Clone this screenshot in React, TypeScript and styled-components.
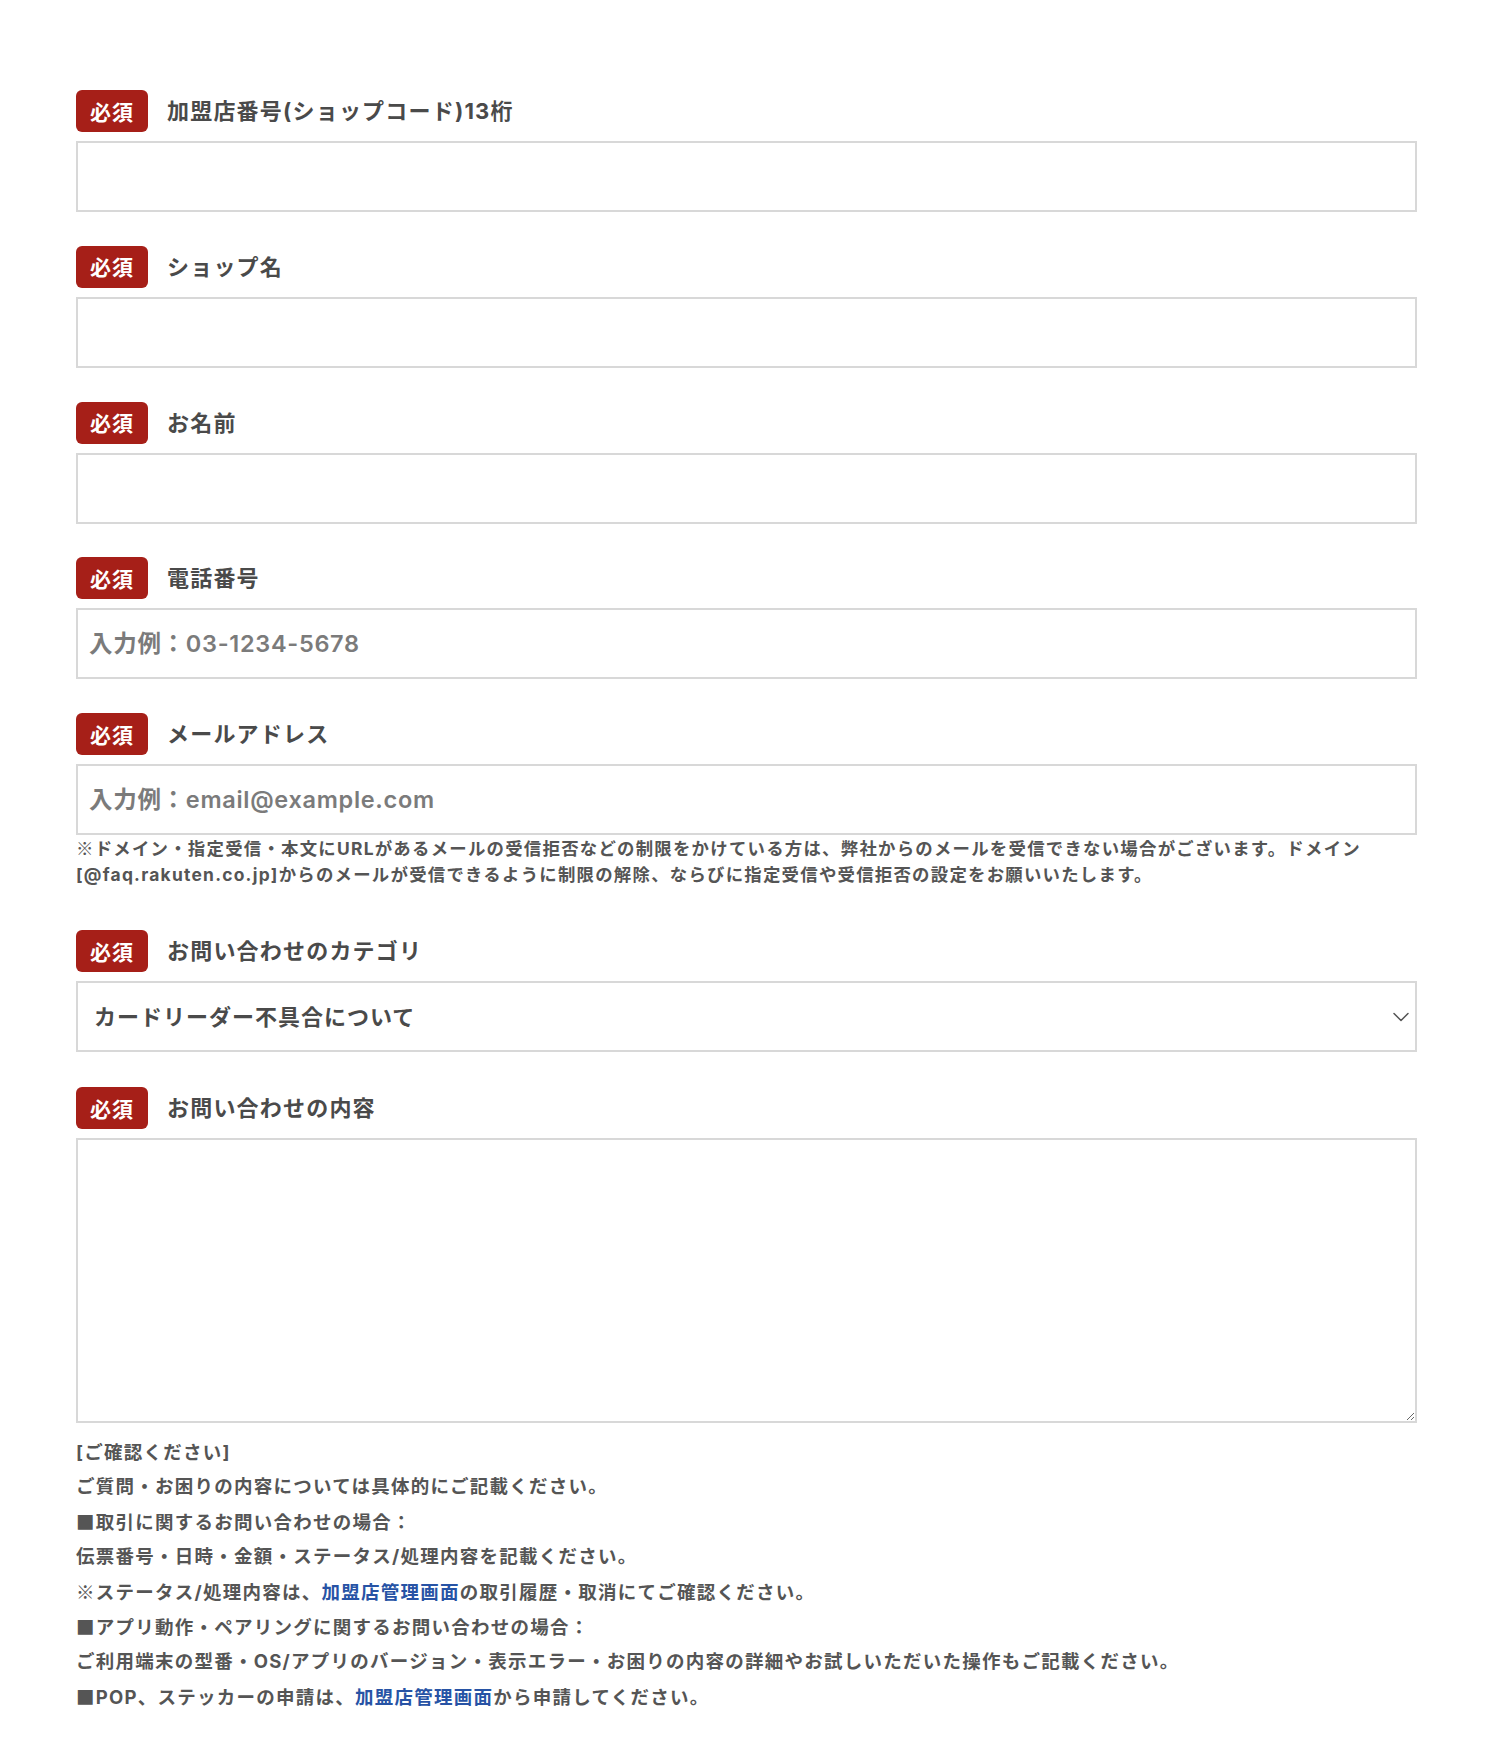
import React from "react";
import styled, { createGlobalStyle } from "styled-components";

const Global = createGlobalStyle`
  html, body { margin: 0; padding: 0; background: #ffffff; }
  body {
    font-family: Inter, "Noto Sans CJK JP", "Noto Sans", sans-serif;
    color: #4a4a4a;
  }
  * { box-sizing: border-box; }
`;

const Page = styled.div`
  width: 1500px;
  padding: 90px 83px 56px 76px;
`;

const Field = styled.div<{ $gap?: number }>`
  display: flex;
  flex-direction: column;
  margin-bottom: ${(p) => (p.$gap ?? 33.75)}px;
`;

const LabelRow = styled.div`
  display: flex;
  align-items: center;
  gap: 19px;
  height: 42px;
  margin-bottom: 9px;
`;

const Badge = styled.span`
  display: inline-flex;
  align-items: center;
  justify-content: center;
  width: 72px;
  height: 42px;
  border-radius: 6px;
  background: #a61f18;
  color: #ffffff;
  font-family: "Noto Sans CJK JP", sans-serif;
  font-size: 21px;
  font-weight: 700;
  letter-spacing: 1px;
  line-height: 1;
`;

const LabelText = styled.span`
  font-size: 22px;
  font-weight: 700;
  letter-spacing: 1.2px;
  color: #4a4a4a;
  line-height: 1;
`;

const TextInput = styled.input`
  display: block;
  width: 100%;
  height: 71px;
  margin: 0;
  padding: 0 11px;
  border: 2px solid #d8d8d8;
  border-radius: 0;
  background: #ffffff;
  font-family: inherit;
  font-size: 23.5px;
  font-weight: 600;
  letter-spacing: 0.7px;
  color: #4a4a4a;
  outline: none;
  &::placeholder {
    color: #7b7b7b;
    opacity: 1;
  }
`;

const Note = styled.p`
  margin: 0;
  font-size: 17.4px;
  font-weight: 700;
  letter-spacing: 1.25px;
  line-height: 26px;
  color: #555555;
`;

/* glyphs such as ※ and ■ are taken from the Japanese face */
const Jp = styled.span`
  font-family: "Noto Sans CJK JP", sans-serif;
`;

const SelectWrap = styled.div`
  position: relative;
  width: 100%;
  height: 71px;
`;

const Select = styled.select`
  display: block;
  width: 100%;
  height: 100%;
  margin: 0;
  padding: 0 50px 0 16px;
  border: 2px solid #d8d8d8;
  border-radius: 0;
  background: #ffffff;
  appearance: none;
  -webkit-appearance: none;
  font-family: inherit;
  font-size: 22px;
  font-weight: 700;
  letter-spacing: 1px;
  color: #4a4a4a;
  outline: none;
`;

const Chevron = styled.svg`
  position: absolute;
  right: 8px;
  top: 50%;
  width: 16px;
  height: 10px;
  transform: translateY(-50%);
  pointer-events: none;
`;

const TextArea = styled.textarea`
  display: block;
  width: 100%;
  height: 285px;
  margin: 0;
  padding: 11px;
  border: 2px solid #d8d8d8;
  border-radius: 0;
  background: #ffffff;
  font-family: inherit;
  font-size: 20px;
  color: #4a4a4a;
  outline: none;
  resize: vertical;
`;

const Notes = styled.div`
  margin-top: 12px;
  display: flex;
  flex-direction: column;
`;

const NoteLine = styled.div`
  font-size: 18.5px;
  font-weight: 700;
  letter-spacing: 1.25px;
  line-height: 34.4px;
  color: #555555;
`;

const Link = styled.a`
  color: #2753a5;
  text-decoration: none;
`;

type FieldDef = { label: string; placeholder?: string };

const simpleFields: FieldDef[] = [
  { label: "加盟店番号(ショップコード)13桁" },
  { label: "ショップ名" },
  { label: "お名前" },
  { label: "電話番号", placeholder: "入力例：03-1234-5678" },
];

const Label: React.FC<{ text: string }> = ({ text }) => (
  <LabelRow>
    <Badge>必須</Badge>
    <LabelText>{text}</LabelText>
  </LabelRow>
);

export default function App() {
  return (
    <>
      <Global />
      <Page>
        {simpleFields.map((f) => (
          <Field key={f.label}>
            <Label text={f.label} />
            <TextInput type="text" placeholder={f.placeholder} />
          </Field>
        ))}

        <Field $gap={42}>
          <Label text="メールアドレス" />
          <TextInput type="text" placeholder="入力例：email@example.com" />
          <Note>
            <Jp>※</Jp>ドメイン・指定受信・本文にURLがあるメールの受信拒否などの制限をかけている方は、弊社からのメールを受信できない場合がございます。ドメイン
            <br />
            [@faq.rakuten.co.jp]からのメールが受信できるように制限の解除、ならびに指定受信や受信拒否の設定をお願いいたします。
          </Note>
        </Field>

        <Field $gap={35}>
          <Label text="お問い合わせのカテゴリ" />
          <SelectWrap>
            <Select defaultValue="card">
              <option value="card">カードリーダー不具合について</option>
            </Select>
            <Chevron viewBox="0 0 16 10" fill="none">
              <polyline
                points="1,1.5 8,8.5 15,1.5"
                stroke="#555555"
                strokeWidth="1.5"
                strokeLinecap="round"
                strokeLinejoin="round"
              />
            </Chevron>
          </SelectWrap>
        </Field>

        <Field $gap={0}>
          <Label text="お問い合わせの内容" />
          <TextArea />
          <Notes>
            <NoteLine>[ご確認ください]</NoteLine>
            <NoteLine>ご質問・お困りの内容については具体的にご記載ください。</NoteLine>
            <NoteLine>
              <Jp>■</Jp>取引に関するお問い合わせの場合：
            </NoteLine>
            <NoteLine>伝票番号・日時・金額・ステータス/処理内容を記載ください。</NoteLine>
            <NoteLine>
              <Jp>※</Jp>ステータス/処理内容は、<Link href="#">加盟店管理画面</Link>の取引履歴・取消にてご確認ください。
            </NoteLine>
            <NoteLine>
              <Jp>■</Jp>アプリ動作・ペアリングに関するお問い合わせの場合：
            </NoteLine>
            <NoteLine>
              ご利用端末の型番・OS/アプリのバージョン・表示エラー・お困りの内容の詳細やお試しいただいた操作もご記載ください。
            </NoteLine>
            <NoteLine>
              <Jp>■</Jp>POP、ステッカーの申請は、<Link href="#">加盟店管理画面</Link>から申請してください。
            </NoteLine>
          </Notes>
        </Field>
      </Page>
    </>
  );
}
